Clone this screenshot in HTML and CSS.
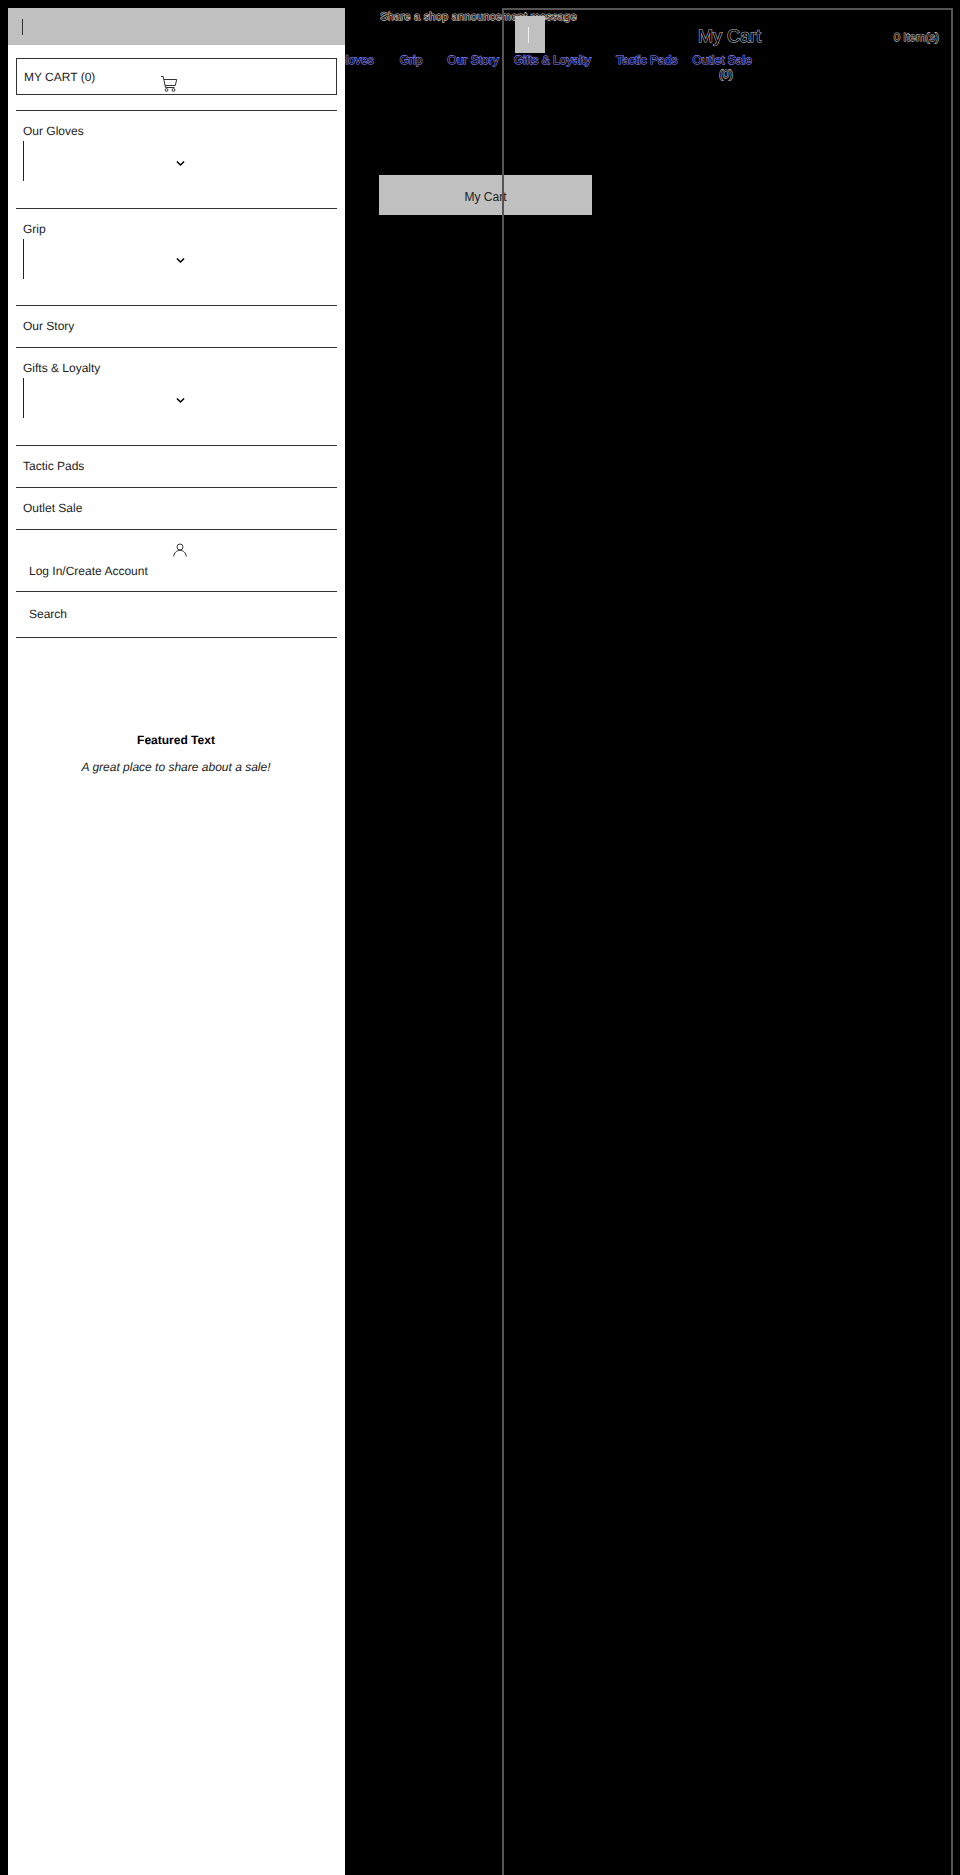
FILE: index.html
```html
<!DOCTYPE html>
<html lang="en">
<head>
<meta charset="utf-8">
<title>Shop</title>
<link rel="stylesheet" href="styles.css">
</head>
<body>
<main class="page">
  <p class="announce hollow">Share a shop announcement message</p>
  <nav class="nav">
    <a class="nav-link hollow gloves">Our Gloves</a>
    <a class="nav-link hollow grip">Grip</a>
    <a class="nav-link hollow story">Our Story</a>
    <a class="nav-link hollow gifts">Gifts &amp; Loyalty</a>
    <a class="nav-link hollow tactic">Tactic Pads</a>
    <a class="nav-link hollow outlet">Outlet Sale</a>
  </nav>
  <div class="count hollow">(0)</div>
  <button class="cart-button">My Cart</button>
</main>

<aside class="cart-drawer">
  <header class="cart-head">
    <button class="cart-close"><span class="bar-light"></span></button>
    <h2 class="cart-title hollow">My Cart</h2>
    <span class="cart-items hollow">0 Item(s)</span>
  </header>
</aside>

<aside class="menu">
  <div class="menu-top"><span class="bar-dark"></span></div>
  <div class="menu-body">
    <div class="my-cart">
      <span>MY CART (0)</span>
      <svg class="cart-icon" viewBox="0 0 18 18" width="18" height="18" fill="none" stroke="#333" stroke-width="1"><path d="M1 1.5h2.2l2.3 11h9"/><path d="M3.7 4.5h13l-1.4 6H5"/><circle cx="6.5" cy="15" r="1.4"/><circle cx="13.5" cy="15" r="1.4"/></svg>
    </div>
    <ul class="menu-list">
      <li class="item tall">
        <span>Our Gloves</span>
        <div class="sub"><svg class="chev" viewBox="0 0 10 7" width="9" height="7" fill="none" stroke="#000" stroke-width="1.7"><path d="M1 1.2l4 4 4-4"/></svg></div>
      </li>
      <li class="item tall">
        <span>Grip</span>
        <div class="sub"><svg class="chev" viewBox="0 0 10 7" width="9" height="7" fill="none" stroke="#000" stroke-width="1.7"><path d="M1 1.2l4 4 4-4"/></svg></div>
      </li>
      <li class="item">Our Story</li>
      <li class="item tall">
        <span>Gifts &amp; Loyalty</span>
        <div class="sub"><svg class="chev" viewBox="0 0 10 7" width="9" height="7" fill="none" stroke="#000" stroke-width="1.7"><path d="M1 1.2l4 4 4-4"/></svg></div>
      </li>
      <li class="item">Tactic Pads</li>
      <li class="item">Outlet Sale</li>
      <li class="account">
        <svg class="user-icon" viewBox="0 0 14 14" width="14" height="14" fill="none" stroke="#333" stroke-width="1"><circle cx="7" cy="4" r="3"/><path d="M.7 13.5C1 9.8 3.5 7.4 7 7.4s6 2.4 6.3 6.1"/></svg>
        <span>Log In/Create Account</span>
      </li>
      <li class="search">Search</li>
    </ul>
    <section class="featured">
      <h3>Featured Text</h3>
      <p>A great place to share about a sale!</p>
    </section>
  </div>
</aside>
</body>
</html>
```
FILE: styles.css
```css
* { box-sizing: border-box; }
html, body { height: 1875px; }
body {
  margin: 0;
  padding: 8px;
  background: #000;
  font-family: "Liberation Sans", Arial, sans-serif;
  font-size: 12px;
  text-rendering: geometricPrecision;
  color: #222;
  position: relative;
  overflow: hidden;
}
.hollow {
  color: #000;
  -webkit-text-stroke: 1.1px var(--edge);
  paint-order: stroke fill;
}
.page { display: flex; flex-direction: column; }
.announce {
  --edge: #e0d8d0;
  margin: 3px 0 0;
  padding-right: 3px;
  font-size: 11px;
  line-height: 13px;
  text-align: center;
  font-weight: 400;
  letter-spacing: .23px;
}
.nav { display: flex; margin-top: 29px; padding-left: 305px; white-space: nowrap; }
.nav-link { --edge: #8585ff; line-height: 15px; }
.grip { margin-left: 26px; }
.story { margin-left: 25px; }
.gifts { margin-left: 15px; }
.tactic { margin-left: 25px; }
.outlet { margin-left: 15px; }
.count {
  --edge: #bbb;
  margin-top: 0;
  padding-left: 711px;
  font-size: 11.5px;
  line-height: 14px;
}
.cart-button {
  margin: 93px 0 0 371px;
  width: 213px;
  height: 40px;
  border: 0;
  padding: 4px 0 0;
  background: #c0c0c0;
  color: #222;
  font: 12px "Liberation Sans", Arial, sans-serif;
}
.cart-drawer {
  position: absolute;
  left: 502px;
  top: 8px;
  width: 451px;
  height: 1867px;
  border: 2px solid #555;
  border-bottom: 0;
  padding: 6px 12px 0 11px;
}
.cart-head { display: flex; align-items: flex-start; }
.cart-close {
  width: 30px;
  height: 37px;
  border: 0;
  padding: 0 3px 0 0;
  background: #c0c0c0;
  display: flex;
  align-items: center;
  justify-content: center;
}
.bar-light { width: 1px; height: 16px; background: #eee; }
.cart-title {
  --edge: #bbb;
  margin: 9px 0 0 153px;
  font-size: 18px;
  line-height: 22px;
  font-weight: 400;
}
.cart-items {
  --edge: #bbb;
  margin: 15px 0 0 auto;
  font-size: 11.5px;
  line-height: 14px;
}
.menu {
  position: absolute;
  left: 8px;
  top: 8px;
  width: 337px;
  height: 1867px;
  background: #fff;
}
.menu-top {
  height: 37px;
  background: #c0c0c0;
  display: flex;
  align-items: center;
  padding-left: 14px;
}
.bar-dark { width: 1px; height: 16px; background: #333; }
.menu-body { padding: 13px 8px 0; }
.my-cart {
  height: 37px;
  border: 1px solid #333;
  padding: 11px 7px 0;
  line-height: 15px;
  position: relative;
}
.cart-icon { position: absolute; left: 143px; top: 16px; }
.menu-list { list-style: none; margin: 15px 0 0; padding: 0; border-top: 1px solid #333; }
.item {
  height: 42px;
  padding: 13px 7px 0;
  line-height: 15px;
  border-bottom: 1px solid #333;
}
.item.tall { height: 97.5px; }
.sub {
  height: 40px;
  margin-top: 2px;
  border-left: 1px solid #222;
  display: flex;
  align-items: center;
  justify-content: center;
  width: 314px;
}
.chev { transform: translateY(2px); }
.account {
  height: 62px;
  border-bottom: 1px solid #333;
  padding: 13px 13px 0;
  display: flex;
  flex-direction: column;
  line-height: 15px;
}
.user-icon { align-self: center; margin-left: 6px; }
.account span { margin-top: 7px; }
.search {
  height: 46.5px;
  border-bottom: 1px solid #333;
  padding: 15px 13px 0;
  line-height: 15px;
}
.featured { margin-top: 95px; text-align: center; padding-right: 1px; }
.featured h3 { margin: 0; font-size: 12px; line-height: 15px; font-weight: 700; color: #000; }
.featured p { margin: 12px 0 0; font-size: 12px; line-height: 15px; font-style: italic; }
```
